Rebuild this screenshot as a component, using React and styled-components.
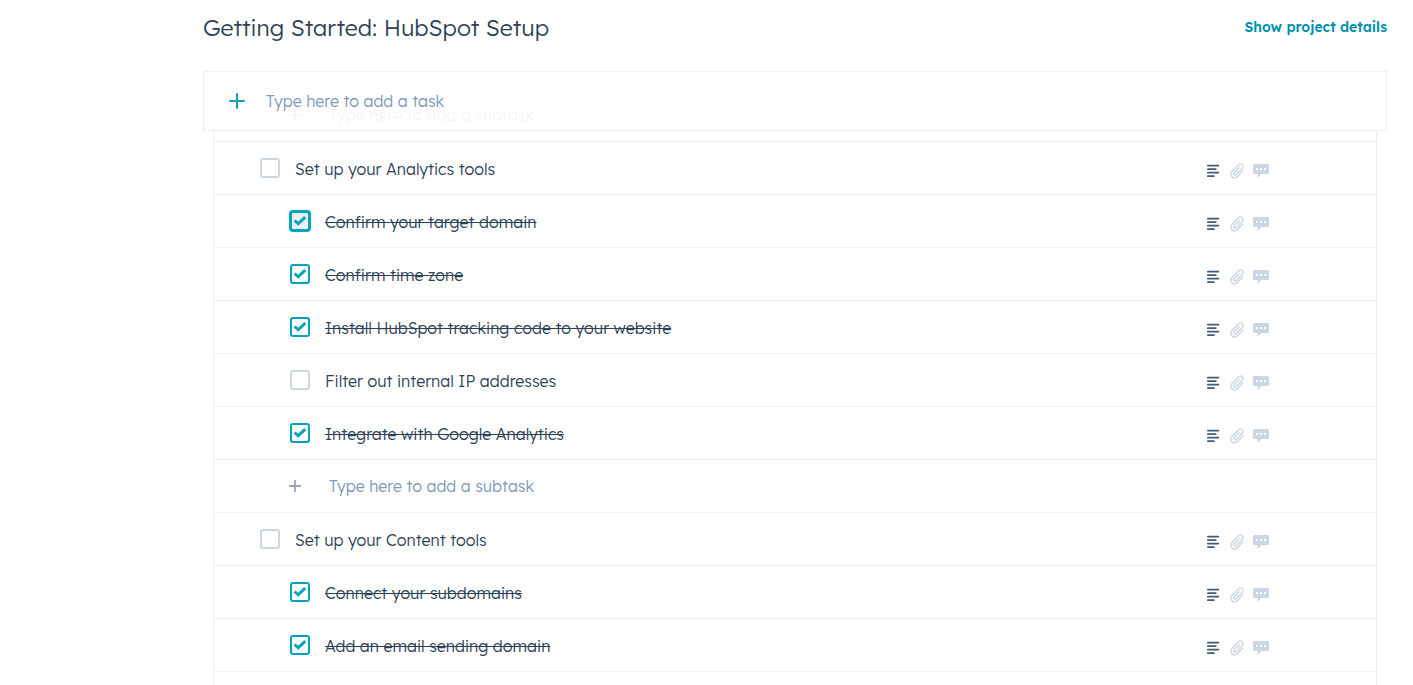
import { useState } from "react";
import styled, { createGlobalStyle, css } from "styled-components";

const initialTasks = [
  {
    title: "Set up your Analytics tools",
    subtasks: [
      { title: "Confirm your target domain", done: true, active: true },
      { title: "Confirm time zone", done: true },
      { title: "Install HubSpot tracking code to your website", done: true },
      { title: "Filter out internal IP addresses", done: false },
      { title: "Integrate with Google Analytics", done: true },
    ],
    canAdd: true,
  },
  {
    title: "Set up your Content tools",
    subtasks: [
      { title: "Connect your subdomains", done: true },
      { title: "Add an email sending domain", done: true },
    ],
  },
];

export default function App() {
  return (
    <>
      <GlobalStyle />
      <Page>
        <Header>
          <Title>Getting Started: HubSpot Setup</Title>
          <DetailsLink href="#details">Show project details</DetailsLink>
        </Header>
        <AddTaskBar>
          <PlusIcon size={16} color="#0fa0b8" />
          <AddInput
            type="text"
            aria-label="Add a task"
            placeholder="Type here to add a task"
          />
        </AddTaskBar>
        <TaskList>
          <AddSubtask />
          {initialTasks.map((task) => (
            <TaskGroup key={task.title} task={task} />
          ))}
        </TaskList>
      </Page>
    </>
  );
}

function TaskGroup({ task }) {
  return (
    <>
      <TaskItem title={task.title} />
      {task.subtasks.map((subtask) => (
        <TaskItem key={subtask.title} {...subtask} isSubtask />
      ))}
      {task.canAdd && <AddSubtask />}
    </>
  );
}

function TaskItem({ title, done = false, active = false, isSubtask = false }) {
  const [isDone, setIsDone] = useState(done);

  return (
    <Row $isSubtask={isSubtask}>
      <TaskLabel $isDone={isDone}>
        <CheckboxWrapper>
          <Checkbox
            type="checkbox"
            checked={isDone}
            $isActive={active}
            onChange={() => setIsDone(!isDone)}
          />
          {isDone && (
            <CheckMark viewBox="0 0 14 12" aria-hidden="true">
              <path d="M1.6 5.5 5.2 8.8 12.2 2.1" />
            </CheckMark>
          )}
        </CheckboxWrapper>
        <TaskTitle>{title}</TaskTitle>
      </TaskLabel>
      <Actions>
        <IconButton type="button" aria-label="Notes">
          <NotesIcon />
        </IconButton>
        <IconButton type="button" aria-label="Attachments">
          <ClipIcon />
        </IconButton>
        <IconButton type="button" aria-label="Comments">
          <CommentIcon />
        </IconButton>
      </Actions>
    </Row>
  );
}

function AddSubtask() {
  return (
    <AddRow>
      <PlusIcon size={12} color="#99a5b3" strokeWidth={2.4} />
      <AddInput
        type="text"
        aria-label="Add a subtask"
        placeholder="Type here to add a subtask"
      />
    </AddRow>
  );
}

function PlusIcon({ size, color, strokeWidth = 2 }) {
  return (
    <svg width={size} height={size} viewBox="0 0 16 16" aria-hidden="true">
      <path
        d="M8 1v14M1 8h14"
        fill="none"
        stroke={color}
        strokeWidth={strokeWidth}
        strokeLinecap="round"
      />
    </svg>
  );
}

function NotesIcon() {
  return (
    <svg width="14" height="14" viewBox="0 0 14 14">
      <path
        d="M.8 1.6h10.6M.8 5.1h8M.8 8.6h10.6M.8 12.1h6.2"
        fill="none"
        stroke="#425b76"
        strokeWidth="1.7"
        strokeLinecap="round"
      />
    </svg>
  );
}

function ClipIcon() {
  return (
    <svg width="14" height="16" viewBox="0 0 14 16">
      <path
        d="m12.8 8-5.3 5.4c-1.6 1.6-4 1.8-5.5.5-1.6-1.4-1.5-3.8 0-5.4l6.500-6.600c1.200-1.100 2.900-1.200 3.900-.2 1.100 1 1 2.700-.2 3.800l-5.900 6c-.7.7-1.600.7-2.200.2-.5-.6-.5-1.500.2-2.200l4.800-4.800"
        fill="none"
        stroke="#cbd6e2"
        strokeWidth="1.4"
        strokeLinecap="round"
        strokeLinejoin="round"
      />
    </svg>
  );
}

function CommentIcon() {
  return (
    <svg width="16" height="14" viewBox="0 0 16 14">
      <path
        d="M1.5 0h13A1.5 1.5 0 0 1 16 1.500v7a1.500 1.500 0 0 1-1.500 1.500H8.500L4.500 14v-4h-3A1.500 1.500 0 0 1 0 8.500v-7A1.500 1.500 0 0 1 1.500 0Z"
        fill="#cbd6e2"
      />
      <path d="M3 4h2v2H3zM7 4h2v2H7zM11 4h2v2h-2z" fill="#fff" />
    </svg>
  );
}

const GlobalStyle = createGlobalStyle`
  * {
    box-sizing: border-box;
  }

  body {
    margin: 0;
    background-color: #fff;
    color: #2d4156;
    font-family: "Lexend Deca", Inter, "Open Sans", sans-serif;
    font-size: 16px;
  }
`;

const Page = styled.main`
  display: flex;
  flex-direction: column;
  height: 100vh;
  overflow: hidden;
  padding: 0 26px 0 203px;
`;

const Header = styled.header`
  display: flex;
  flex-shrink: 0;
  align-items: center;
  justify-content: space-between;
  padding: 10px 0 27px;
`;

const Title = styled.h1`
  margin: 0;
  padding-top: 2px;
  font-size: 23px;
  font-weight: 300;
  line-height: 32px;
`;

const DetailsLink = styled.a`
  color: #0091ae;
  font-size: 14px;
  font-weight: 600;
  text-decoration: none;
`;

const AddTaskBar = styled.div`
  position: sticky;
  top: 0;
  z-index: 1;
  display: flex;
  flex-shrink: 0;
  align-items: center;
  gap: 21px;
  height: 60px;
  margin-bottom: -43px;
  padding: 0 25px;
  border: 1px solid #eaf0f6;
  background-color: rgba(255, 255, 255, 0.9);
`;

const AddInput = styled.input`
  flex: 1;
  min-width: 0;
  padding: 0;
  border: 0;
  outline: 0;
  background: transparent;
  color: #33475b;
  font: inherit;
  font-weight: 300;
  line-height: 24px;

  &::placeholder {
    color: #7c98b6;
    opacity: 1;
  }
`;

const TaskList = styled.ul`
  flex: 1 0 auto;
  margin: 0 10px;
  padding: 0;
  border: 1px solid #eaf0f6;
  border-bottom: 0;
  list-style: none;
`;

const rowStyles = css`
  display: flex;
  align-items: center;
  height: 53px;
  border-bottom: 1px solid #eaf0f6;
`;

const Row = styled.li`
  ${rowStyles}
  justify-content: space-between;
  padding: 0 107px 0 ${({ $isSubtask }) => ($isSubtask ? "76px" : "46px")};
`;

const AddRow = styled.li`
  ${rowStyles}
  gap: 28px;
  padding: 0 107px 0 75px;
`;

const TaskLabel = styled.label`
  display: flex;
  align-items: center;
  gap: 15px;
  font-weight: 300;
  line-height: 24px;
  text-decoration: ${({ $isDone }) => ($isDone ? "line-through" : "none")};
`;

const TaskTitle = styled.span`
  padding-top: 2px;
`;

const CheckboxWrapper = styled.span`
  position: relative;
  display: flex;
`;

const Checkbox = styled.input`
  width: 20px;
  height: 20px;
  margin: 0;
  appearance: none;
  border: 2px solid #cbd6e2;
  border-radius: 3px;
  background-color: #fff;

  &:checked {
    border-color: #00a4bd;
  }

  ${({ $isActive }) =>
    $isActive &&
    css`
      background-color: #eaf0f6;
      box-shadow: 0 0 0 1px #00a4bd;
    `}
`;

const CheckMark = styled.svg`
  position: absolute;
  top: 4px;
  left: 3px;
  width: 14px;
  height: 12px;
  fill: none;
  stroke: #00a4bd;
  stroke-width: 3;
  pointer-events: none;
`;

const Actions = styled.div`
  display: flex;
  align-items: center;
  gap: 9px;
  padding-top: 6px;
`;

const IconButton = styled.button`
  display: flex;
  padding: 0;
  border: 0;
  background: none;
  cursor: pointer;
`;
